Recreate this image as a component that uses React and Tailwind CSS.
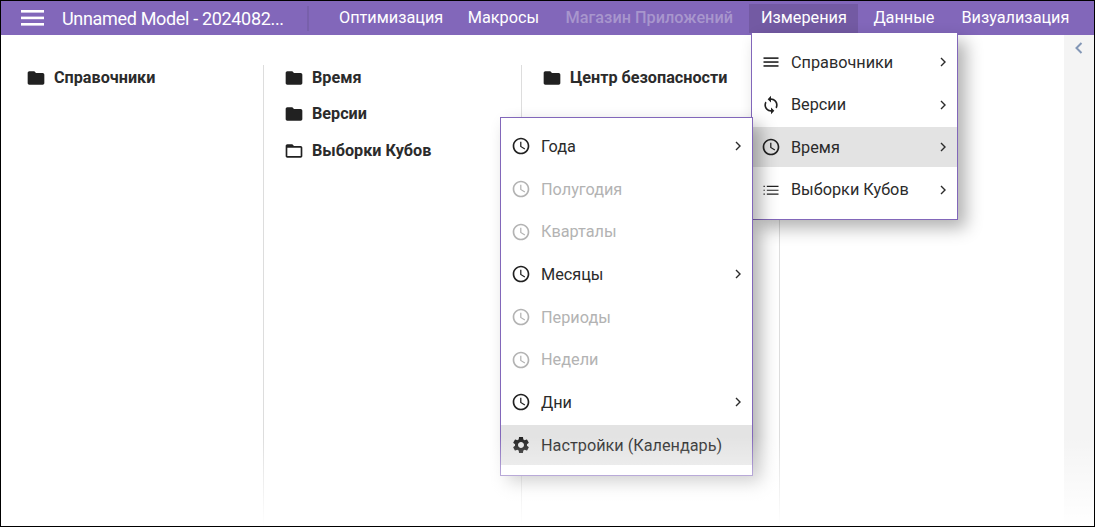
import React from "react";

const Folder = ({ open }) => (
  <svg width="20" height="20" viewBox="0 0 24 24" className="shrink-0">
    {open ? (
      <path fill="#212121" d="M20 6h-8l-2-2H4c-1.1 0-2 .9-2 2v12c0 1.1.9 2 2 2h16c1.1 0 2-.9 2-2V8c0-1.1-.9-2-2-2zm0 12H4V8h16v10z" />
    ) : (
      <path fill="#212121" d="M10 4H4c-1.1 0-2 .9-2 2v12c0 1.1.9 2 2 2h16c1.1 0 2-.9 2-2V8c0-1.1-.9-2-2-2h-8l-2-2z" />
    )}
  </svg>
);

const Clock = () => (
  <svg width="20" height="20" viewBox="0 0 24 24" fill="currentColor">
    <path d="M11.99 2C6.47 2 2 6.48 2 12s4.47 10 9.99 10C17.52 22 22 17.52 22 12S17.52 2 11.99 2zM12 20c-4.42 0-8-3.58-8-8s3.58-8 8-8 8 3.58 8 8-3.58 8-8 8z" />
    <path d="M12.5 7H11v6l5.25 3.15.75-1.23-4.5-2.67z" />
  </svg>
);

const Lines = () => (
  <svg width="20" height="20" viewBox="0 0 24 24" fill="currentColor">
    <rect x="3" y="6.4" width="18" height="1.9" />
    <rect x="3" y="11.1" width="18" height="1.9" />
    <rect x="3" y="15.8" width="18" height="1.9" />
  </svg>
);

const Sync = () => (
  <svg width="20" height="20" viewBox="0 0 24 24" fill="currentColor">
    <path d="M12 4V1L8 5l4 4V6c3.31 0 6 2.69 6 6 0 1.01-.25 1.97-.7 2.8l1.46 1.46C19.54 15.03 20 13.57 20 12c0-4.42-3.58-8-8-8zm0 14c-3.31 0-6-2.69-6-6 0-1.01.25-1.97.7-2.8L5.24 7.74C4.46 8.97 4 10.43 4 12c0 4.42 3.58 8 8 8v3l4-4-4-4v3z" />
  </svg>
);

const ListIcon = () => (
  <svg width="20" height="20" viewBox="0 0 24 24" fill="currentColor">
    <path d="M3 7h1.6v1.4H3zM3 11.6h1.6V13H3zM3 16.2h1.6v1.4H3zM7 7h14v1.4H7zM7 11.6h14V13H7zM7 16.2h14v1.4H7z" />
  </svg>
);

const Gear = () => (
  <svg width="20" height="20" viewBox="0 0 24 24" fill="currentColor">
    <path d="M19.14 12.94c.04-.3.06-.61.06-.94 0-.32-.02-.64-.07-.94l2.03-1.58c.18-.14.23-.41.12-.61l-1.92-3.32c-.12-.22-.37-.29-.59-.22l-2.39.96c-.5-.38-1.03-.7-1.62-.94l-.36-2.54c-.04-.24-.24-.41-.48-.41h-3.84c-.24 0-.43.17-.47.41l-.36 2.54c-.59.24-1.13.57-1.62.94l-2.39-.96c-.22-.08-.47 0-.59.22L2.74 8.87c-.12.21-.08.47.12.61l2.03 1.58c-.05.3-.09.63-.09.94s.02.64.07.94l-2.03 1.58c-.18.14-.23.41-.12.61l1.92 3.32c.12.22.37.29.59.22l2.39-.96c.5.38 1.03.7 1.62.94l.36 2.54c.05.24.24.41.48.41h3.84c.24 0 .44-.17.47-.41l.36-2.54c.59-.24 1.13-.56 1.62-.94l2.39.96c.22.08.47 0 .59-.22l1.92-3.32c.12-.22.07-.47-.12-.61l-2.01-1.58zM12 15.6c-1.98 0-3.6-1.62-3.6-3.6s1.62-3.6 3.6-3.6 3.6 1.62 3.6 3.6-1.62 3.6-3.6 3.6z" />
  </svg>
);

const Chevron = () => (
  <svg width="10" height="10" viewBox="0 0 10 10" fill="none" stroke="currentColor" strokeWidth="1.4" className="shrink-0">
    <path d="M3 1l4 4-4 4" />
  </svg>
);

const MenuItem = ({ icon, label, arrow, disabled, active, tight }) => (
  <div
    className={`flex h-10 items-center text-[16.25px] ${tight ? "pl-[9px] pr-[9px]" : "pl-[10px] pr-[9px]"} ${
      active ? "bg-[#e3e3e3]" : ""
    } ${disabled ? "text-[#b3b3b3]" : "text-[#2b2b2b]"}`}
  >
    <span className={`flex w-5 justify-center ${disabled ? "text-[#b3b3b3]" : "text-[#212121]"}`}>{icon}</span>
    <span className="ml-[10px] flex-1 whitespace-nowrap pt-[2px]">{label}</span>
    {arrow && <Chevron />}
  </div>
);

const Nav = ({ children, dim, active, className = "" }) => (
  <div
    className={`flex h-[29px] items-center px-[11.5px] ${className} ${active ? "bg-[#735aa3]" : ""} ${
      dim ? "font-medium text-[#a896cd]" : "text-white"
    }`}
  >
    {children}
  </div>
);

const Entry = ({ label, open }) => (
  <div className="flex h-[36.5px] items-center gap-2">
    <Folder open={open} />
    <span className="whitespace-nowrap text-[16.2px] font-bold text-[#2b2b2b]">{label}</span>
  </div>
);

export default function App() {
  return (
    <div
      className="relative flex h-[527px] w-[1095px] flex-col overflow-hidden border border-black bg-white"
      style={{ fontFamily: "Roboto, 'Noto Sans', sans-serif" }}
    >
      <header className="flex h-[34px] shrink-0 items-center bg-[#8267ba] text-[16.25px]">
        <svg width="23" height="16" viewBox="0 0 23 16" fill="white" className="ml-[20px] shrink-0">
          <rect x="0" y="0" width="23" height="2.6" />
          <rect x="0" y="6.6" width="23" height="2.6" />
          <rect x="0" y="13" width="23" height="2.6" />
        </svg>
        <div className="ml-[18px] w-[221px] whitespace-nowrap text-[18px] tracking-[-0.33px] text-white">Unnamed Model - 2024082...</div>
        <div className="ml-[24px] mr-[18.5px] h-[25px] w-[2px] bg-[#7860ab]" />
        <div className="mt-[1px] flex items-center">
          <Nav>Оптимизация</Nav>
          <Nav className="ml-[1.5px]">Макросы</Nav>
          <Nav dim className="ml-[3.5px]">Магазин Приложений</Nav>
          <Nav active className="ml-[5px]">Измерения</Nav>
          <Nav className="ml-[3.5px]">Данные</Nav>
          <Nav className="ml-[4px]">Визуализация</Nav>
        </div>
      </header>

      <main className="flex flex-1 pl-[5px]">
        <div className="flex flex-1 items-start pt-[30px]">
          {[
            [["Справочники"]],
            [["Время"], ["Версии"], ["Выборки Кубов", true]],
            [["Центр безопасности"]],
          ].map((col, i) => (
            <div key={i} className="h-[462px] w-[258px] border-r border-[#dddddd] pl-[20px]">
              <div className="-mt-[5.3px]">
                {col.map(([label, open]) => (
                  <Entry key={label} label={label} open={open} />
                ))}
              </div>
            </div>
          ))}
        </div>
        <aside className="flex w-[30px] shrink-0 justify-center bg-[#f4f4f4] pt-[6px] text-[#8397b6]">
          <svg width="12" height="14" viewBox="0 0 12 14" fill="none" stroke="currentColor" strokeWidth="2">
            <path d="M8.5 2L3.5 7l5 5" />
          </svg>
        </aside>
      </main>

      <div className="absolute left-[750px] top-[32px] z-10 w-[207px] border border-t-0 border-[#8267ba] bg-white pb-[9px] pt-[9px] shadow-[8px_8px_16px_rgba(0,0,0,0.3)]">
        <div className="flex flex-col gap-[2.5px]">
          <MenuItem tight icon={<Lines />} label="Справочники" arrow />
          <MenuItem tight icon={<Sync />} label="Версии" arrow />
          <MenuItem tight icon={<Clock />} label="Время" arrow active />
          <MenuItem tight icon={<ListIcon />} label="Выборки Кубов" arrow />
        </div>
      </div>

      <div className="absolute left-[499px] top-[116px] z-20 h-[359px] w-[253px] border border-[#8267ba] bg-white pt-[8.3px] shadow-[8px_8px_16px_rgba(0,0,0,0.3)]">
        <div className="flex flex-col gap-[2.67px]">
          <MenuItem icon={<Clock />} label="Года" arrow />
          <MenuItem icon={<Clock />} label="Полугодия" disabled />
          <MenuItem icon={<Clock />} label="Кварталы" disabled />
          <MenuItem icon={<Clock />} label="Месяцы" arrow />
          <MenuItem icon={<Clock />} label="Периоды" disabled />
          <MenuItem icon={<Clock />} label="Недели" disabled />
          <MenuItem icon={<Clock />} label="Дни" arrow />
          <MenuItem icon={<Gear />} label="Настройки (Календарь)" active />
        </div>
      </div>

      <div className="pointer-events-none absolute bottom-0 left-0 right-0 z-30 h-[90px] bg-gradient-to-b from-[#ffffff00] to-white" />
    </div>
  );
}
